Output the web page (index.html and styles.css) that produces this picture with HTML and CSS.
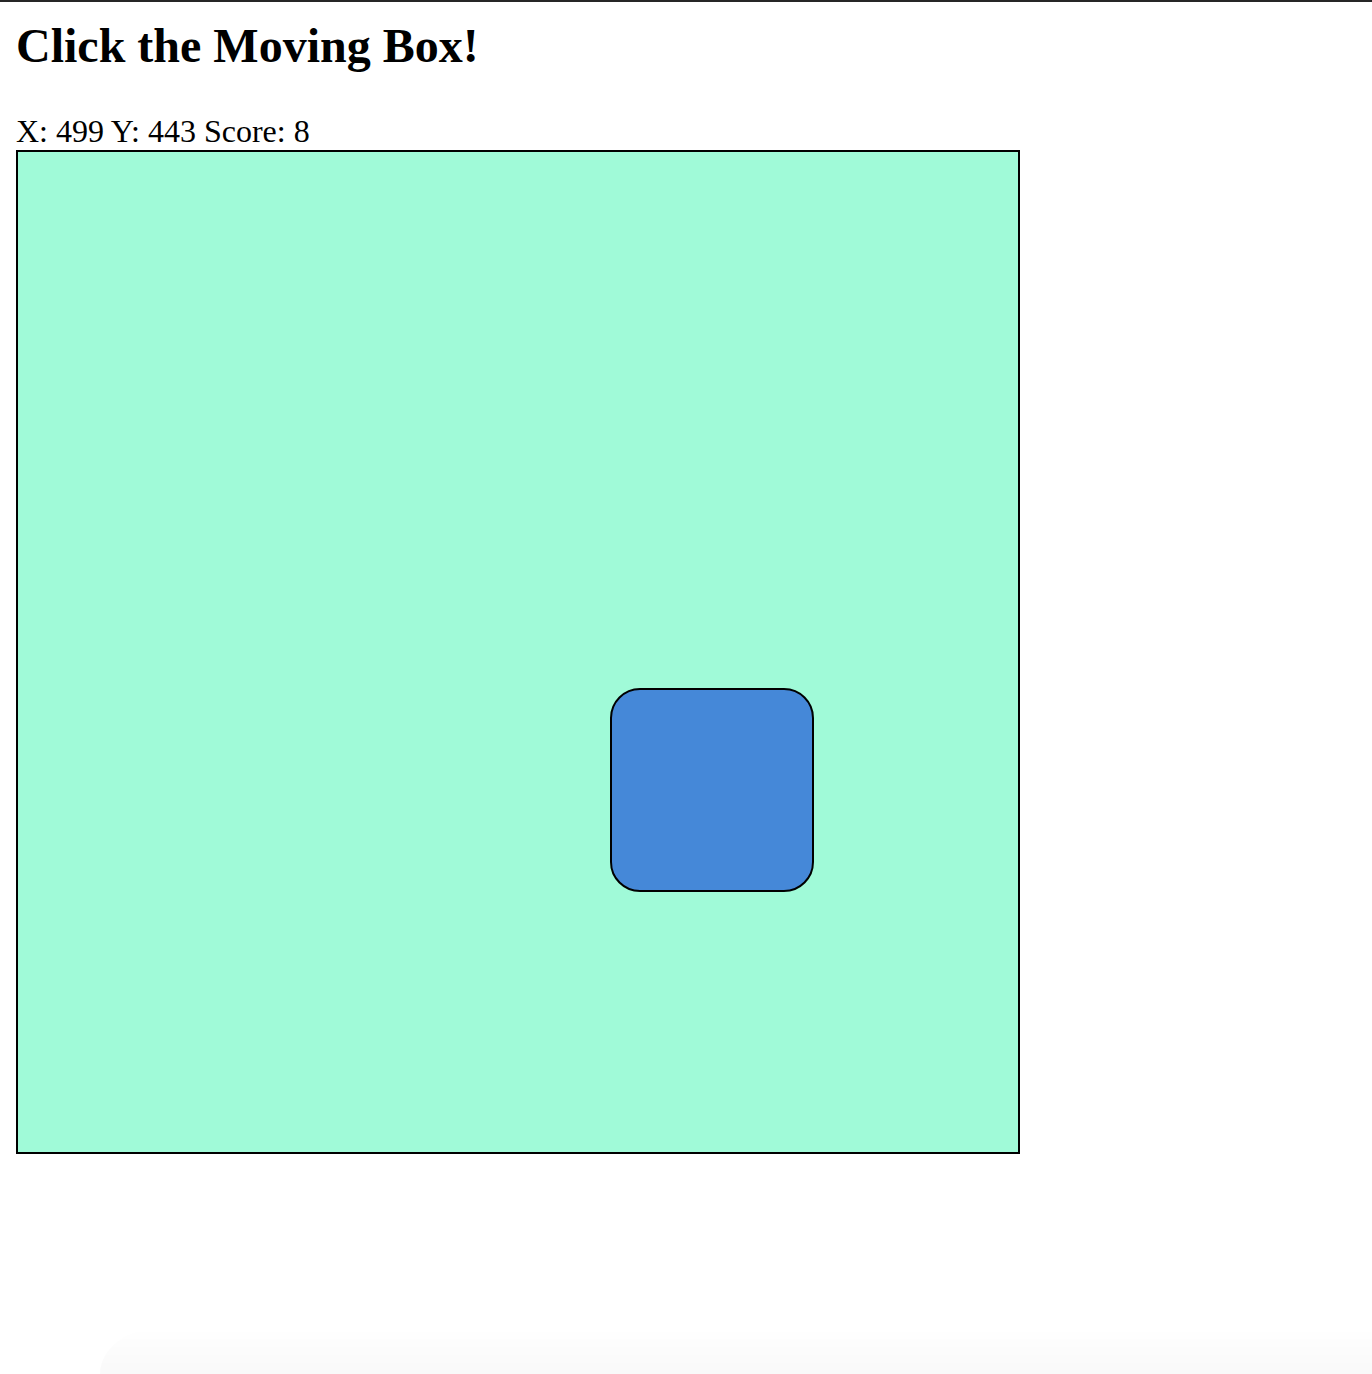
FILE: index.html
```html
<!DOCTYPE html>
<html lang="en">
<head>
<meta charset="utf-8">
<title>Click the Moving Box!</title>
<link rel="stylesheet" href="styles.css">
</head>
<body>
  <main class="page">
    <h1 class="title">Click the Moving Box!</h1>
    <div class="status">X: 499 Y: 443 Score: 8</div>
    <div class="arena">
      <div class="target" style="left: 592px; top: 536px;"></div>
    </div>
  </main>
  <div class="shade"></div>
</body>
</html>
```

FILE: styles.css
```css
html {
  border-top: 2px solid #262626;
  background: #ffffff;
}

body {
  margin: 0;
  padding: 16px 16px 0;
  font-family: "Liberation Serif", "Times New Roman", serif;
  font-size: 32px;
  color: #000;
}

.page {
  display: flex;
  flex-direction: column;
  align-items: flex-start;
}

.title {
  margin: 0 0 40px;
  font-size: 48px;
  font-weight: bold;
  line-height: normal;
}

.status {
  line-height: normal;
}

.arena {
  position: relative;
  width: 1000px;
  height: 1000px;
  border: 2px solid #000;
  background: #a0fad8;
}

.target {
  position: absolute;
  width: 200px;
  height: 200px;
  box-sizing: content-box;
  border: 2px solid #000;
  border-radius: 30px;
  background: #4588d8;
}

.shade {
  position: fixed;
  left: 100px;
  right: 0;
  bottom: 0;
  height: 46px;
  background: linear-gradient(to bottom, rgba(0,0,0,0), rgba(0,0,0,0.025));
  border-top-left-radius: 60px 46px;
  pointer-events: none;
}
```
